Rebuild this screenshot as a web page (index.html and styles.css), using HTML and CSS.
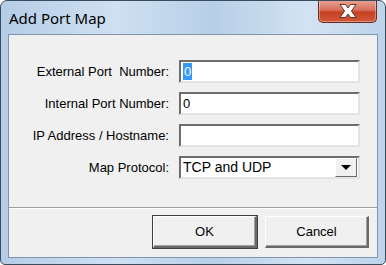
FILE: index.html
```html
<!DOCTYPE html>
<html lang="en">
<head>
    <meta charset="UTF-8">
    <title>Add Port Map</title>
    <link rel="stylesheet" href="styles.css">
</head>
<body>

    <div class="window">
        <div class="titlebar">
            <span class="title">Add Port Map</span>
            <div class="close-btn">
                <svg width="24" height="16" viewBox="0 0 24 16">
                    <path d="M4 1.5 L9.5 1.5 L12 5 L14.5 1.5 L20 1.5 L15.5 8 L20 14.5 L14.5 14.5 L12 11 L9.5 14.5 L4 14.5 L8.5 8 Z" fill="#fff" stroke="#6a3027" stroke-width="1"/>
                </svg>
            </div>
        </div>

        <div class="client">
            <div class="form">
                <div class="row">
                    <label>External Port&nbsp; Number:</label>
                    <div class="field"><span class="selected">0</span></div>
                </div>
                <div class="row">
                    <label>Internal Port Number:</label>
                    <div class="field">0</div>
                </div>
                <div class="row">
                    <label>IP Address / Hostname:</label>
                    <div class="field"></div>
                </div>
                <div class="row">
                    <label>Map Protocol:</label>
                    <div class="field combo">
                        <span>TCP and UDP</span>
                        <div class="drop-btn"><span class="arrow"></span></div>
                    </div>
                </div>
            </div>

            <div class="separator"></div>

            <div class="buttons">
                <button class="btn default">OK</button>
                <button class="btn">Cancel</button>
            </div>
        </div>
    </div>

</body>
</html>
```

FILE: styles.css
```css
body {
    margin: 0;
    padding: 0;
    background: #fff;
    font-family: "Liberation Sans", Arial, sans-serif;
}
.window {
    width: 384px;
    height: 263px;
    border: 1px solid #3a4b5e;
    border-radius: 7px 7px 5px 5px;
    background: linear-gradient(to right, #b4cde6, #cfe0f2 30%, #b7cfe7 55%, #d3e3f3 80%, #bcd3ea);
    display: flex;
    flex-direction: column;
    overflow: hidden;
}
.titlebar {
    height: 33px;
    display: flex;
    justify-content: space-between;
    align-items: flex-start;
    padding-left: 8px;
    padding-right: 8px;
}
.title {
    font-family: "Noto Sans", "Open Sans", sans-serif;
    font-size: 15px;
    color: #000;
    margin-top: 7px;
}
.close-btn {
    width: 57px;
    height: 22px;
    margin-top: -1px;
    border: 1px solid #6b2a22;
    border-top: none;
    border-radius: 0 0 5px 5px;
    background: linear-gradient(to bottom, #e8a596, #d9705d 45%, #c5401f 55%, #d1583a);
    display: flex;
    align-items: center;
    justify-content: center;
    box-shadow: inset 0 0 0 1px rgba(255, 255, 255, 0.35);
}
.client {
    flex: 1;
    margin: 0 7px 6px 7px;
    border: 1px solid #8094ad;
    background: #f0f0f0;
    display: flex;
    flex-direction: column;
}
.form {
    padding-top: 25px;
    display: flex;
    flex-direction: column;
    gap: 9px;
}
.row {
    display: flex;
    align-items: center;
    height: 23px;
}
.row label {
    width: 160px;
    text-align: right;
    font-size: 13px;
    color: #000;
    margin-right: 10px;
}
.field {
    width: 175px;
    height: 19px;
    background: #fff;
    border-top: 2px solid #6d6d6d;
    border-left: 2px solid #6d6d6d;
    border-right: 2px solid #e3e3e3;
    border-bottom: 2px solid #e3e3e3;
    font-size: 13px;
    line-height: 19px;
    padding-left: 2px;
}
.selected {
    background: #3399ff;
    color: #fff;
    padding: 1px 1px;
}
.combo {
    display: flex;
    justify-content: space-between;
    align-items: center;
    font-size: 14px;
}
.drop-btn {
    width: 20px;
    height: 17px;
    margin-right: 1px;
    background: #f0f0f0;
    border-top: 1px solid #fff;
    border-left: 1px solid #fff;
    border-right: 1px solid #696969;
    border-bottom: 1px solid #696969;
    display: flex;
    align-items: center;
    justify-content: center;
}
.arrow {
    width: 0;
    height: 0;
    border-left: 5px solid transparent;
    border-right: 5px solid transparent;
    border-top: 5px solid #000;
}
.separator {
    margin-top: 28px;
    border-top: 1px solid #a0a0a0;
    border-bottom: 1px solid #fff;
}
.buttons {
    display: flex;
    justify-content: flex-end;
    gap: 8px;
    padding-top: 7px;
    padding-right: 8px;
}
.btn {
    width: 104px;
    height: 32px;
    font-family: "Liberation Sans", Arial, sans-serif;
    font-size: 13px;
    color: #000;
    background: #f0f0f0;
    border-top: 1px solid #fff;
    border-left: 1px solid #fff;
    border-right: 2px solid #696969;
    border-bottom: 2px solid #696969;
    box-shadow: inset -1px -1px 0 #a0a0a0;
}
.default {
    outline: 1px solid #404040;
}
```
